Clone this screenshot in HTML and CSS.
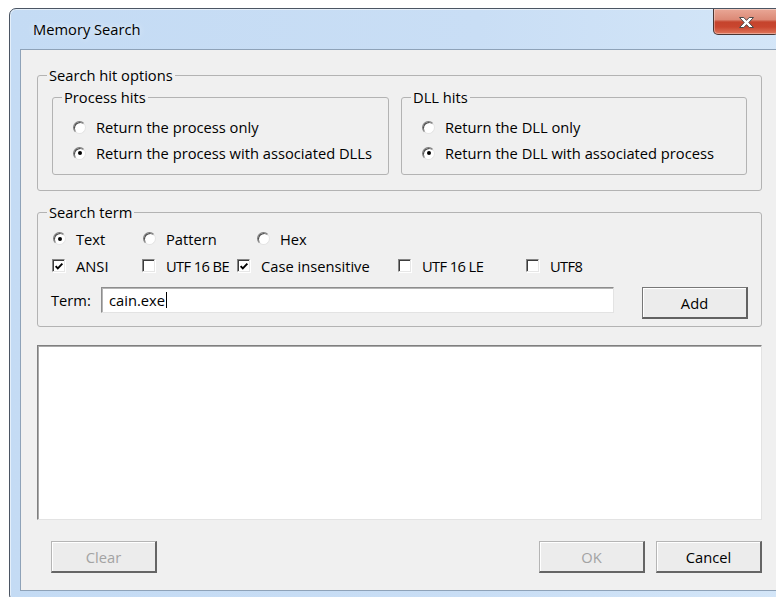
FILE: index.html
```html
<!DOCTYPE html>
<html lang="en">
<head>
<meta charset="utf-8">
<title>Memory Search</title>
<link rel="stylesheet" href="styles.css">
</head>
<body>
<div class="window">
  <div class="titlebar">
    <span class="title">Memory Search</span>
    <button class="close" aria-label="Close">
      <svg width="17" height="13" viewBox="0 0 17 13" aria-hidden="true">
        <path d="M1.5 1.5H5.8L8.5 4.4L11.2 1.5H15.5L10.8 6.5L15.5 11.5H11.2L8.5 8.6L5.8 11.5H1.5L6.2 6.5Z" fill="#fff" stroke="#4a4a4a" stroke-width="1" stroke-linejoin="round"/>
      </svg>
    </button>
  </div>

  <div class="client">
    <fieldset class="group">
      <legend>Search hit options</legend>
      <div class="group-body hits-body">
        <div class="hit-row">
          <fieldset class="group group-process">
            <legend>Process hits</legend>
            <div class="group-body option-list">
              <label class="option"><span class="radio"></span>Return the process only</label>
              <label class="option"><span class="radio checked"></span>Return the process with associated DLLs</label>
            </div>
          </fieldset>
          <fieldset class="group group-dll">
            <legend>DLL hits</legend>
            <div class="group-body option-list">
              <label class="option"><span class="radio"></span>Return the DLL only</label>
              <label class="option"><span class="radio checked"></span>Return the DLL with associated process</label>
            </div>
          </fieldset>
        </div>
      </div>
    </fieldset>

    <fieldset class="group group-term">
      <legend>Search term</legend>
      <div class="group-body term-body">
        <div class="mode-row">
          <label class="option"><span class="radio checked"></span>Text</label>
          <label class="option"><span class="radio"></span>Pattern</label>
          <label class="option"><span class="radio"></span>Hex</label>
        </div>
        <div class="encoding-row">
          <label class="option"><span class="check checked"><svg width="11" height="11" viewBox="0 0 11 11" aria-hidden="true"><path d="M1.8 5L4.2 7.6L9.2 2.4" fill="none" stroke="#000" stroke-width="2.1"/></svg></span>ANSI</label>
          <label class="option"><span class="check"></span><span class="tight">UTF 16 BE</span></label>
          <label class="option"><span class="check checked"><svg width="11" height="11" viewBox="0 0 11 11" aria-hidden="true"><path d="M1.8 5L4.2 7.6L9.2 2.4" fill="none" stroke="#000" stroke-width="2.1"/></svg></span>Case insensitive</label>
          <label class="option"><span class="check"></span><span class="tight">UTF 16 LE</span></label>
          <label class="option"><span class="check"></span><span class="tight">UTF8</span></label>
        </div>
        <div class="term-row">
          <span class="term-label">Term:</span>
          <div class="textbox">cain.exe<span class="caret"></span></div>
          <button class="btn btn-default">Add</button>
        </div>
      </div>
    </fieldset>

    <div class="results"></div>

    <div class="footer">
      <button class="btn btn-clear" disabled>Clear</button>
      <button class="btn btn-ok" disabled>OK</button>
      <button class="btn btn-cancel">Cancel</button>
    </div>
  </div>
</div>
</body>
</html>
```

FILE: styles.css
```css
html, body {
  margin: 0;
  padding: 0;
  overflow: hidden;
  background: #fff;
}

body {
  font-family: "Open Sans", "Noto Sans", sans-serif;
  font-size: 14.7px;
  line-height: 18px;
  color: #000;
}

/* Aero-style window frame */
.window {
  margin: 8px 0 0 9px;
  width: 781px;
  box-sizing: border-box;
  border: 1px solid #4b5563;
  border-radius: 7px;
  padding: 0 10px 10px 10px;
  background: linear-gradient(to right, #c4dbf4 0%, #c9def5 60%, #d4e6f8 100%);
  box-shadow: inset 0 0 0 1px rgba(255, 255, 255, 0.55);
}

.titlebar {
  display: flex;
  align-items: flex-start;
  height: 40px;
}

.title {
  margin: 11px 0 0 13px;
  text-shadow: 0 0 6px rgba(255, 255, 255, 0.9);
}

.close {
  margin-left: auto;
  width: 66px;
  height: 26px;
  padding: 0;
  border: 1px solid #4a3532;
  border-top: none;
  border-radius: 0 0 5px 5px;
  background: linear-gradient(#e9a796 0%, #dc8a77 42%, #c5432c 52%, #c9462f 72%, #e0775c 100%);
  box-shadow: inset 0 0 0 1px rgba(255, 255, 255, 0.35);
  display: flex;
  align-items: center;
  justify-content: center;
}

.close svg {
  display: block;
  margin-top: 1px;
}

/* Dialog client area */
.client {
  border: 1px solid #8ea2b8;
  background: #f0f0f0;
  padding: 16px 16px 17px;
  display: flex;
  flex-direction: column;
}

/* Group boxes */
.group {
  margin: 0;
  padding: 0;
  min-width: 0;
  border: 1px solid #b3b3b3;
  border-radius: 3px;
}

.group legend {
  margin-left: 9px;
  padding: 0 2px;
  line-height: 18px;
}

.hits-body {
  padding: 4px 14px 15px;
}

.hit-row {
  display: flex;
  gap: 12px;
}

.group-process {
  width: 335px;
  flex: none;
}

.group-dll {
  flex: 1;
}

.option-list {
  padding: 8px 0 8px 20px;
}

.option-list .option {
  height: 26px;
}

.option {
  display: flex;
  align-items: center;
  white-space: nowrap;
}

.tight {
  letter-spacing: -0.6px;
}

/* Classic sunken radio button */
.radio {
  position: relative;
  flex: none;
  width: 13px;
  height: 13px;
  box-sizing: border-box;
  margin-right: 10px;
  border-radius: 50%;
  background: #fff;
  border: 1px solid;
  border-color: #7c7c7c #e4e4e4 #e4e4e4 #7c7c7c;
  box-shadow: inset 1px 1px 0 #4e4e4e;
}

.radio.checked::after {
  content: "";
  position: absolute;
  left: 3.5px;
  top: 3.5px;
  width: 4px;
  height: 4px;
  border-radius: 50%;
  background: #000;
}

/* Classic sunken check box */
.check {
  flex: none;
  width: 13px;
  height: 13px;
  box-sizing: border-box;
  margin-right: 11px;
  background: #fff;
  border: 1px solid;
  border-color: #858585 #e6e6e6 #e6e6e6 #858585;
  box-shadow: inset 1px 1px 0 #3c3c3c, 1px 1px 0 #fff;
  display: flex;
  align-items: center;
  justify-content: center;
}

.check svg {
  display: block;
  margin: 1px 0 0 1px;
}

.group-term {
  margin-top: 12px;
}

.term-body {
  padding: 4px 13px 7px 15px;
}

.mode-row {
  display: grid;
  grid-template-columns: 90px 114px auto;
  height: 27px;
  align-items: center;
}

.encoding-row {
  display: grid;
  grid-template-columns: 90px 95px 161px 128px auto;
  height: 27px;
  align-items: center;
  margin-left: -1px;
}

.term-row {
  display: flex;
  align-items: flex-start;
  margin-top: 8px;
  margin-left: -2px;
}

.term-label {
  width: 50px;
  line-height: 26px;
}

.textbox {
  width: 513px;
  height: 26px;
  box-sizing: border-box;
  padding-left: 7px;
  line-height: 24px;
  background: #fff;
  border: 1px solid;
  border-color: #8d8d8d #e3e3e3 #e3e3e3 #8d8d8d;
  box-shadow: inset 1px 1px 0 #b5b5b5;
  display: flex;
  align-items: center;
}

.caret {
  width: 1px;
  height: 16px;
  margin-left: 1px;
  background: #000;
}

/* Push buttons */
.btn {
  width: 106px;
  height: 32px;
  padding: 0;
  font: inherit;
  color: #000;
  background: #ececec;
  border: 1px solid #b5b5b5;
  border-right: 2px solid #656565;
  border-bottom: 2px solid #656565;
  box-shadow: inset 1px 1px 0 #fff;
}

.btn:disabled {
  color: #a3a3a3;
}

.btn-default {
  margin-left: auto;
  border-color: #626262;
  border-top-color: #777;
  border-left-color: #777;
}

.results {
  margin-top: 18px;
  height: 175px;
  box-sizing: border-box;
  background: #fff;
  border: 1px solid;
  border-color: #7f7f7f #e3e3e3 #e3e3e3 #7f7f7f;
  box-shadow: inset 1px 1px 0 #a9a9a9;
}

.footer {
  display: flex;
  margin-top: 21px;
}

.btn-clear {
  margin-left: 14px;
}

.btn-ok {
  margin-left: auto;
}

.btn-cancel {
  margin-left: 11px;
}
```
